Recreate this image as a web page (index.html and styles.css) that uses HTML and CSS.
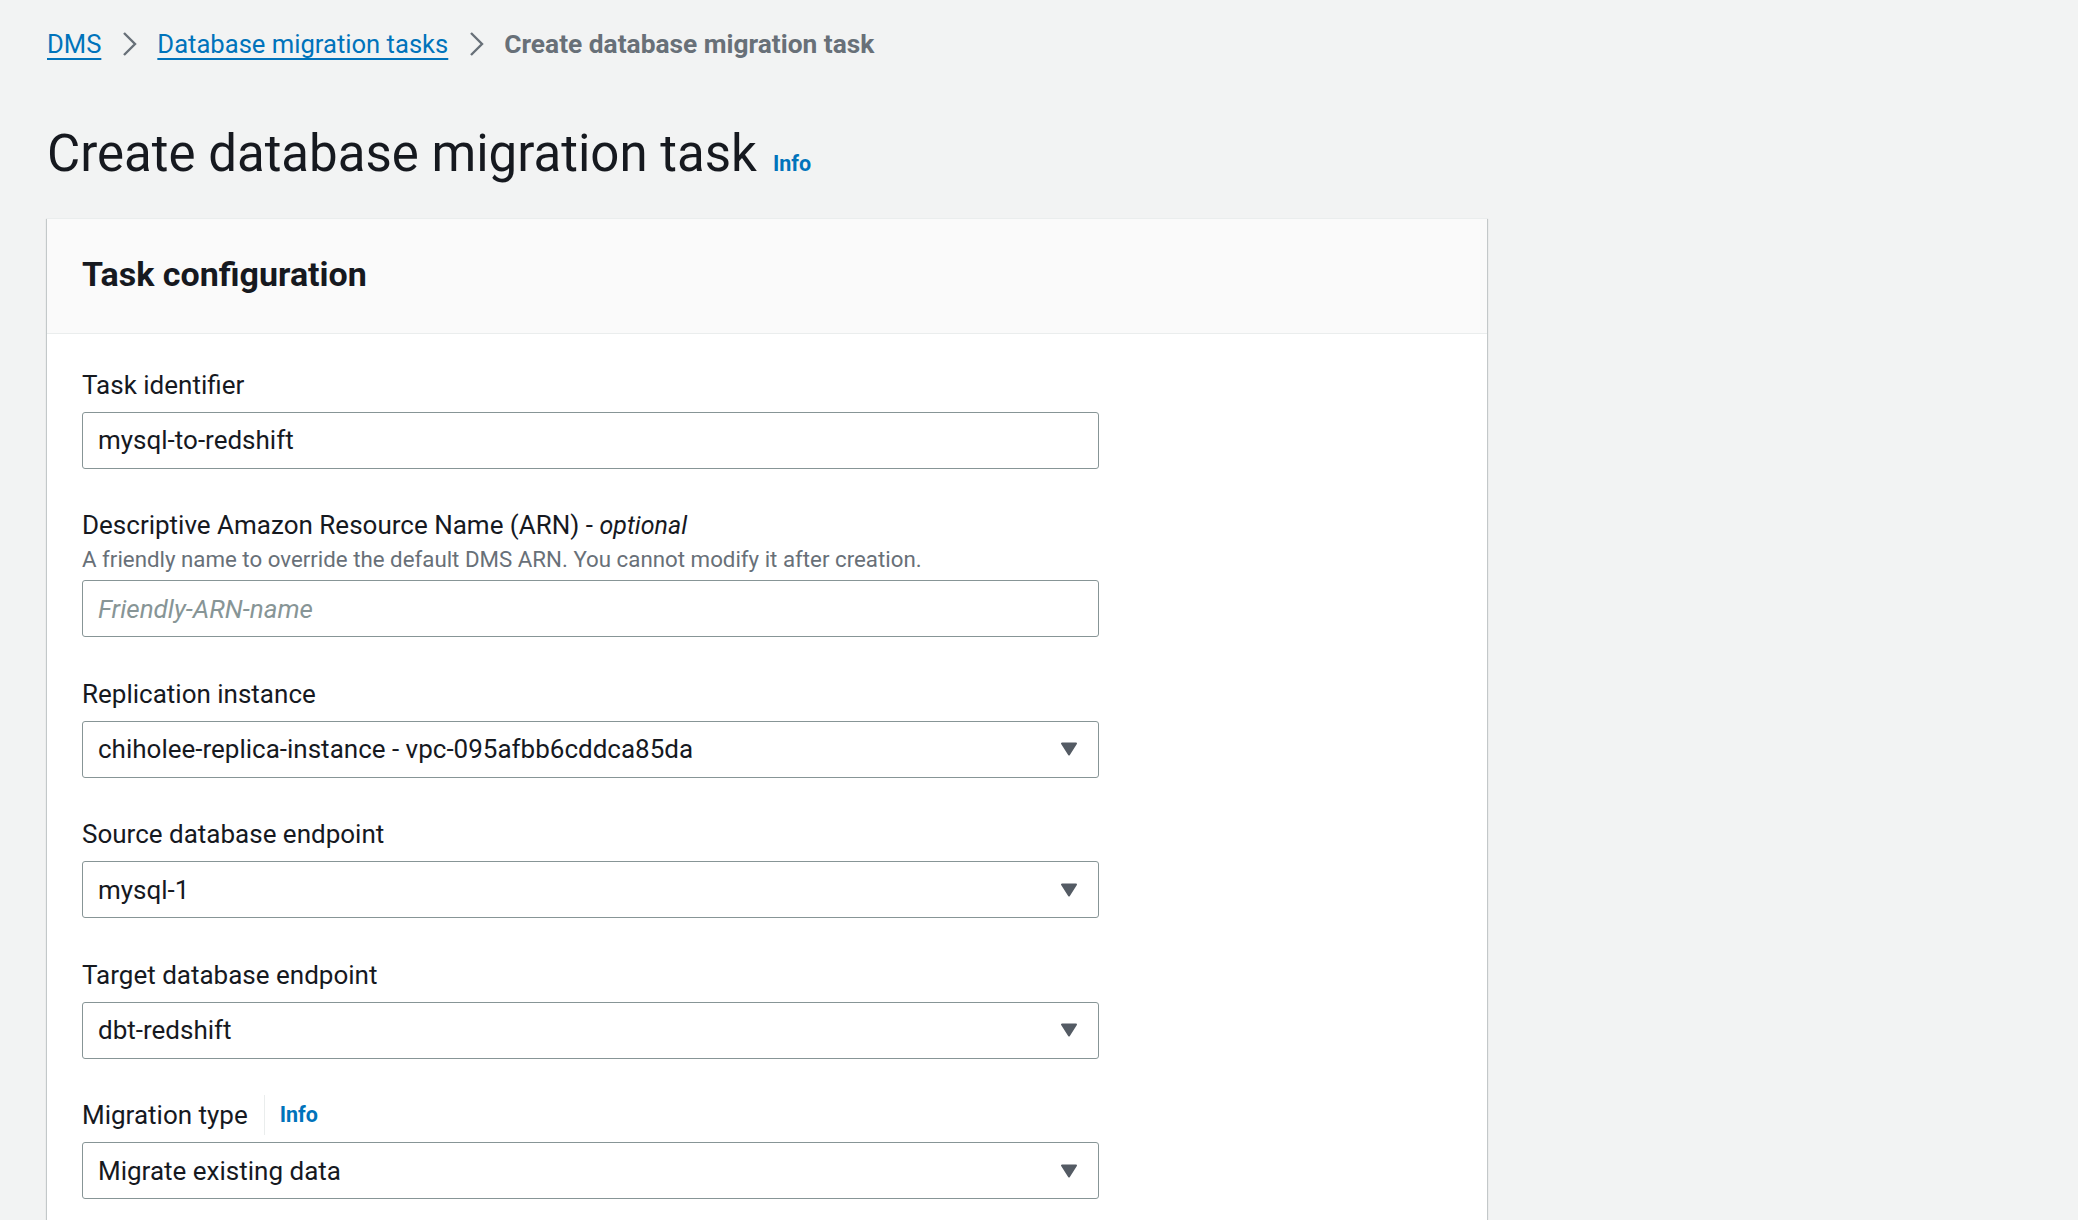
FILE: index.html
```html
<!DOCTYPE html>
<html lang="en">
<head>
<meta charset="utf-8">
<title>Create database migration task</title>
<link rel="stylesheet" href="styles.css">
</head>
<body>
<div class="page">
  <nav class="breadcrumbs">
    <a class="crumb-link" href="#">DMS</a>
    <svg class="chev" viewBox="0 0 16 26" width="16" height="26"><path d="M3 2 L14 13 L3 24" fill="none" stroke="#687078" stroke-width="2.4"/></svg>
    <a class="crumb-link" href="#">Database migration tasks</a>
    <svg class="chev" viewBox="0 0 16 26" width="16" height="26"><path d="M3 2 L14 13 L3 24" fill="none" stroke="#687078" stroke-width="2.4"/></svg>
    <span class="crumb-current">Create database migration task</span>
  </nav>

  <header class="page-header">
    <h1 class="page-title">Create database migration task</h1>
    <a class="info-link title-info" href="#">Info</a>
  </header>

  <section class="panel">
    <div class="panel-header">
      <h2 class="panel-title">Task configuration</h2>
    </div>
    <div class="panel-body">
      <div class="field">
        <label class="field-label">Task identifier</label>
        <div class="control"><input class="text-input" type="text" value="mysql-to-redshift"></div>
      </div>

      <div class="field">
        <label class="field-label">Descriptive Amazon Resource Name (ARN) - <i class="optional">optional</i></label>
        <div class="field-desc">A friendly name to override the default DMS ARN. You cannot modify it after creation.</div>
        <div class="control control-desc"><input class="text-input" type="text" placeholder="Friendly-ARN-name"></div>
      </div>

      <div class="field">
        <label class="field-label">Replication instance</label>
        <div class="control">
          <div class="select"><span class="select-value">chiholee-replica-instance - vpc-095afbb6cddca85da</span>
            <svg class="caret" viewBox="0 0 18 14" width="18" height="14"><path d="M2 1.5 H16 L9 12.5 Z" fill="#545b64" stroke="#545b64" stroke-width="2" stroke-linejoin="round"/></svg>
          </div>
        </div>
      </div>

      <div class="field">
        <label class="field-label">Source database endpoint</label>
        <div class="control">
          <div class="select"><span class="select-value">mysql-1</span>
            <svg class="caret" viewBox="0 0 18 14" width="18" height="14"><path d="M2 1.5 H16 L9 12.5 Z" fill="#545b64" stroke="#545b64" stroke-width="2" stroke-linejoin="round"/></svg>
          </div>
        </div>
      </div>

      <div class="field">
        <label class="field-label">Target database endpoint</label>
        <div class="control">
          <div class="select"><span class="select-value">dbt-redshift</span>
            <svg class="caret" viewBox="0 0 18 14" width="18" height="14"><path d="M2 1.5 H16 L9 12.5 Z" fill="#545b64" stroke="#545b64" stroke-width="2" stroke-linejoin="round"/></svg>
          </div>
        </div>
      </div>

      <div class="field">
        <div class="field-label label-row">
          <label>Migration type</label>
          <span class="label-divider"></span>
          <a class="info-link" href="#">Info</a>
        </div>
        <div class="control">
          <div class="select"><span class="select-value">Migrate existing data</span>
            <svg class="caret" viewBox="0 0 18 14" width="18" height="14"><path d="M2 1.5 H16 L9 12.5 Z" fill="#545b64" stroke="#545b64" stroke-width="2" stroke-linejoin="round"/></svg>
          </div>
        </div>
      </div>
    </div>
  </section>
</div>
</body>
</html>
```
FILE: styles.css
```css
html, body {
  margin: 0;
  padding: 0;
  background: #f2f3f3;
  font-family: Roboto, "Liberation Sans", sans-serif;
  color: #16191f;
}

.page {
  padding: 26px 0 0 47px;
  height: 1194px;
  overflow: hidden;
}

.breadcrumbs {
  display: flex;
  align-items: center;
  gap: 20px;
  height: 36px;
  font-size: 25.6px;
  line-height: 36px;
}

.crumb-link {
  color: #0073bb;
  text-decoration: underline;
  text-decoration-thickness: 2px;
  text-underline-offset: 5px;
}

.crumb-current {
  color: #687078;
  font-weight: 700;
  font-size: 26.3px;
}

.chev {
  display: block;
}

.page-header {
  display: flex;
  align-items: baseline;
  gap: 16px;
  margin-top: 62px;
}

.page-title {
  margin: 0;
  font-size: 51px;
  line-height: 60px;
  font-weight: 400;
  color: #16191f;
}

.info-link {
  color: #0073bb;
  font-weight: 700;
  font-size: 21.5px;
  text-decoration: none;
}

.panel {
  margin-top: 34px;
  width: 1440px;
  background: #ffffff;
  box-shadow: 0 1px 1px 0 rgba(0, 28, 36, 0.3), 1px 1px 1px 0 rgba(0, 28, 36, 0.15), -1px 1px 1px 0 rgba(0, 28, 36, 0.15);
  border-top: 1px solid #eaeded;
  min-height: 1100px;
}

.panel-header {
  background: #fafafa;
  padding: 35px 35px 39px;
  border-bottom: 1px solid #eaeded;
}

.panel-title {
  margin: 0;
  font-size: 34px;
  line-height: 40px;
  font-weight: 700;
}

.panel-body {
  padding: 32.5px 35px 40px;
}

.field {
  margin-bottom: 38.6px;
}

.field-label {
  display: block;
  font-size: 26px;
  line-height: 36px;
  color: #16191f;
}

.optional {
  font-size: 25px;
}

.label-row {
  display: flex;
  align-items: center;
  height: 36px;
}

.label-divider {
  width: 1px;
  height: 40px;
  background: #eaeded;
  margin: 0 15px 0 16px;
}

.field-desc {
  font-size: 22.3px;
  line-height: 30px;
  color: #687078;
}

.control {
  margin-top: 9px;
  width: 1017px;
}

.control-desc {
  margin-top: 6px;
}

.text-input {
  box-sizing: border-box;
  display: block;
  width: 100%;
  height: 57px;
  margin: 0;
  padding: 0 15px;
  border: 1px solid #879596;
  border-radius: 3px;
  font-family: Roboto, "Liberation Sans", sans-serif;
  font-size: 26px;
  color: #16191f;
  background: #ffffff;
  outline: none;
}

.text-input::placeholder {
  color: #879596;
  font-style: italic;
}

.select {
  box-sizing: border-box;
  display: flex;
  align-items: center;
  justify-content: space-between;
  height: 57px;
  padding: 0 20px 0 15px;
  border: 1px solid #879596;
  border-radius: 3px;
  background: #ffffff;
  font-size: 26px;
  line-height: 36px;
  color: #16191f;
}

.caret {
  display: block;
}
```
